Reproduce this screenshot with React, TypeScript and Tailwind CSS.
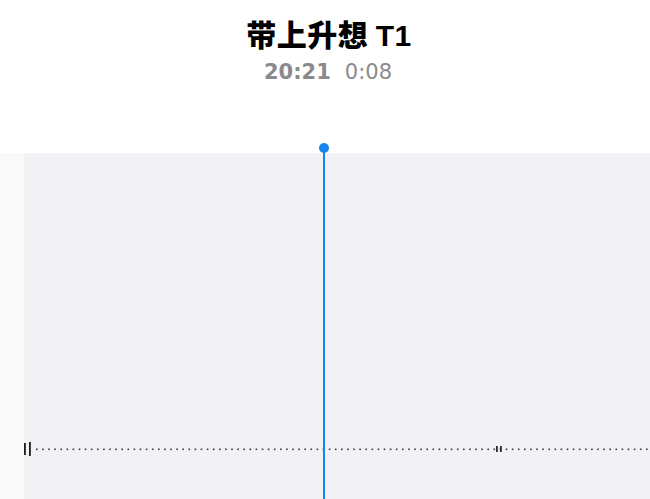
import React from "react";

function Wave() {
  const dots: number[] = [];
  for (let x = 36; x < 650; x += 6.1) dots.push(x);
  return (
    <svg width="626" height="30" viewBox="24 434 626 30" className="block">
      {dots.map((x, i) => (
        <rect key={i} x={x} y={448.5} width={1.6} height={1.6} fill="#3a3a3c" />
      ))}
      <rect x={24} y={443} width={1.8} height={12} fill="#1c1c1e" />
      <rect x={29} y={442} width={1.8} height={14} fill="#1c1c1e" />
      <rect x={496} y={446} width={1.8} height={6} fill="#2c2c2e" />
      <rect x={500} y={446} width={1.8} height={6} fill="#2c2c2e" />
    </svg>
  );
}

export default function App() {
  return (
    <div
      className="w-[650px] h-[499px] overflow-hidden bg-white flex flex-col relative"
      style={{ fontFamily: '"Liberation Sans", "Noto Sans CJK SC", sans-serif' }}
    >
      <div className="h-[153px] shrink-0 flex flex-col items-center pt-[12px]">
        <div
          className="text-[30px] leading-[42px] font-black text-black tracking-[0.5px] pl-[8px]"
          style={{ fontFamily: '"Noto Sans CJK SC", sans-serif' }}
        >
          带上升想 <span style={{ fontFamily: '"Liberation Sans", sans-serif' }} className="font-bold">T1</span>
        </div>
        <div
          className="text-[21px] leading-[26px] text-[#8a8a8e] mt-[2px] pl-[6px] flex gap-[14px]"
          style={{ fontFamily: '"DejaVu Sans", sans-serif' }}
        >
          <span className="font-bold">20:21</span>
          <span>0:08</span>
        </div>
      </div>
      <div className="flex-1 flex">
        <div className="w-[24px] bg-[#f9f9fa]" />
        <div className="flex-1 bg-[#f2f2f6] flex flex-col justify-end pb-[35px]">
          <Wave />
        </div>
      </div>
      <div className="absolute left-[323px] top-[148px] bottom-0 w-[2px] bg-[#1685f0]" />
      <div className="absolute left-[319px] top-[143px] w-[10px] h-[10px] rounded-full bg-[#1685f0]" />
    </div>
  );
}
